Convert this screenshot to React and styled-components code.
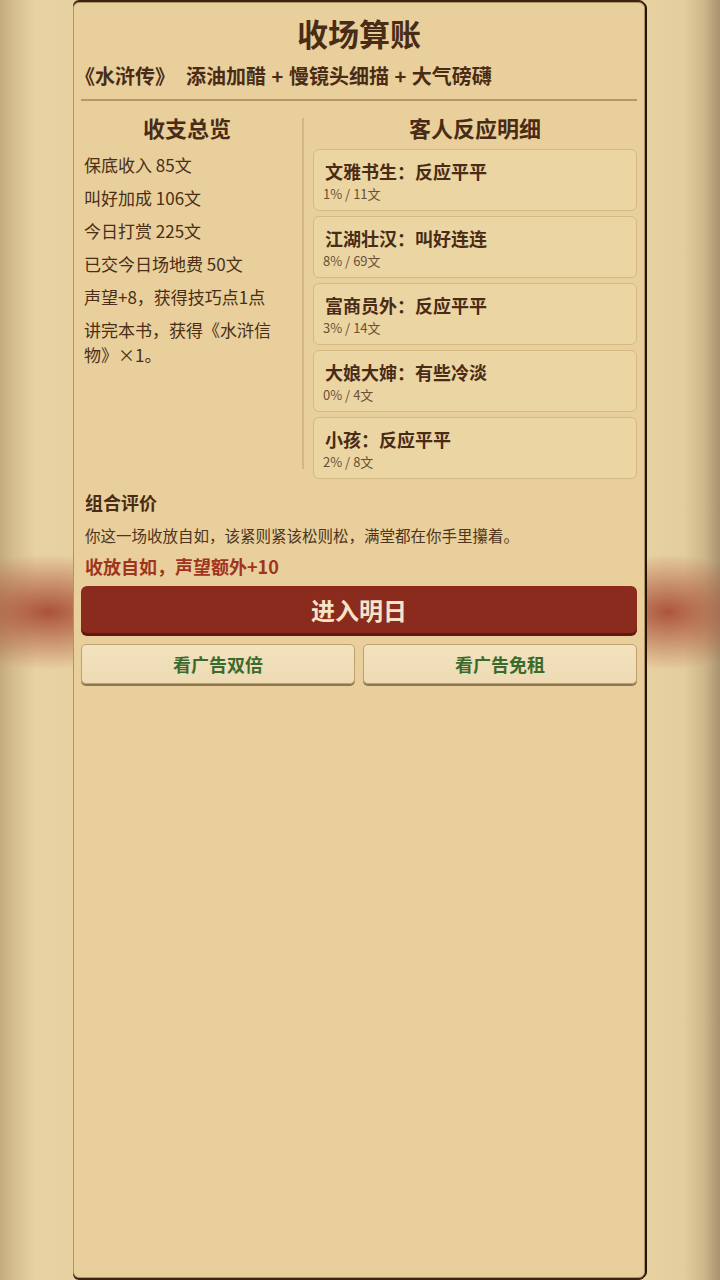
import styled, { createGlobalStyle } from 'styled-components';

const GlobalStyle = createGlobalStyle`
  html, body {
    margin: 0;
    padding: 0;
  }
  body {
    width: 720px;
    height: 1280px;
    overflow: hidden;
    font-family: 'Noto Sans CJK SC', 'Noto Sans', sans-serif;
  }
`;

const summary = [
  '保底收入 85文',
  '叫好加成 106文',
  '今日打赏 225文',
  '已交今日场地费 50文',
  '声望+8，获得技巧点1点',
  '讲完本书，获得《水浒信物》×1。',
];

const guests = [
  { name: '文雅书生', mood: '反应平平', rate: '1%', coins: '11文' },
  { name: '江湖壮汉', mood: '叫好连连', rate: '8%', coins: '69文' },
  { name: '富商员外', mood: '反应平平', rate: '3%', coins: '14文' },
  { name: '大娘大婶', mood: '有些冷淡', rate: '0%', coins: '4文' },
  { name: '小孩', mood: '反应平平', rate: '2%', coins: '8文' },
];

const App = () => {
  return (
    <StScreen>
      <GlobalStyle />
      <StPanel>
        <StTitle>收场算账</StTitle>
        <StSubtitle>{'《水浒传》  添油加醋 + 慢镜头细描 + 大气磅礴'}</StSubtitle>
        <StDivider />

        <StColumns>
          <StSummaryColumn>
            <StColumnHeading>收支总览</StColumnHeading>
            <StSummaryList>
              {summary.map((line) => (
                <StSummaryItem key={line}>{line}</StSummaryItem>
              ))}
            </StSummaryList>
          </StSummaryColumn>

          <StSeparator />

          <StGuestColumn>
            <StColumnHeading>客人反应明细</StColumnHeading>
            <StGuestList>
              {guests.map((g) => (
                <StGuestCard key={g.name}>
                  <StGuestTitle>
                    {g.name}：{g.mood}
                  </StGuestTitle>
                  <StGuestMeta>
                    {g.rate} / {g.coins}
                  </StGuestMeta>
                </StGuestCard>
              ))}
            </StGuestList>
          </StGuestColumn>
        </StColumns>

        <StComboSection>
          <StComboHeading>组合评价</StComboHeading>
          <StComboText>你这一场收放自如，该紧则紧该松则松，满堂都在你手里攥着。</StComboText>
          <StComboBonus>收放自如，声望额外+10</StComboBonus>
        </StComboSection>

        <StNextButton>进入明日</StNextButton>
        <StAdRow>
          <StAdButton>看广告双倍</StAdButton>
          <StAdButton>看广告免租</StAdButton>
        </StAdRow>
      </StPanel>
    </StScreen>
  );
};

export default App;

const StScreen = styled.div`
  width: 720px;
  height: 1280px;
  box-sizing: border-box;
  padding: 2px 0 0 73px;
  background:
    radial-gradient(ellipse 120px 58px at 48px 612px, rgba(162, 64, 44, 0.88), rgba(170, 80, 55, 0) 100%),
    radial-gradient(ellipse 100px 58px at 668px 612px, rgba(162, 64, 44, 0.85), rgba(170, 80, 55, 0) 100%),
    linear-gradient(
      to right,
      #c4aa7c 0px,
      #d6bd8e 14px,
      #e8d2a3 36px,
      #e8d1a1 72px,
      #e8d1a1 650px,
      #e4cd9d 684px,
      #cdb688 704px,
      #a89270 720px
    );
`;

const StPanel = styled.div`
  width: 572px;
  height: 1276px;
  box-sizing: border-box;
  padding: 9px 7px 0 7px;
  background: #e8cf9b;
  border: 1px solid #b2925f;
  border-radius: 6px;
  box-shadow:
    2px 0 0 #24150a,
    0 -2px 0 #3a2412,
    0 2px 0 #3a2412;
  color: #4a2e18;
`;

const StTitle = styled.h1`
  margin: 0;
  text-align: center;
  font-size: 31px;
  line-height: 42px;
  font-weight: 700;
  color: #4a2c16;
`;

const StSubtitle = styled.div`
  margin-top: 8px;
  margin-left: -6px;
  white-space: pre;
  word-spacing: 1px;
  font-size: 20px;
  line-height: 28px;
  font-weight: 700;
  color: #4a2c16;
`;

const StDivider = styled.div`
  height: 2px;
  margin-top: 9px;
  background: #b69866;
`;

const StColumns = styled.div`
  display: flex;
  align-items: stretch;
  margin-top: 11px;
`;

const StSummaryColumn = styled.div`
  width: 212px;
  flex-shrink: 0;
  display: flex;
  flex-direction: column;
`;

const StSeparator = styled.div`
  width: 2px;
  margin: 6px 9px 10px 9px;
  background: #d2b684;
`;

const StGuestColumn = styled.div`
  flex: 1;
  display: flex;
  flex-direction: column;
`;

const StColumnHeading = styled.h2`
  margin: 0;
  text-align: center;
  font-size: 22px;
  line-height: 30px;
  font-weight: 700;
  color: #4a2c16;
`;

const StSummaryList = styled.ul`
  list-style: none;
  margin: 10px 0 0;
  padding: 0 10px 0 3px;
  display: flex;
  flex-direction: column;
  gap: 8px;
`;

const StSummaryItem = styled.li`
  font-size: 17px;
  line-height: 25px;
  color: #4a2e18;
`;

const StGuestList = styled.div`
  margin-top: 7px;
  display: flex;
  flex-direction: column;
  gap: 5px;
`;

const StGuestCard = styled.div`
  padding: 9px 11px 7px 11px;
  background: #ebd5a3;
  border: 1px solid #d5b985;
  border-radius: 6px;
`;

const StGuestTitle = styled.div`
  font-size: 18px;
  line-height: 24px;
  font-weight: 700;
  color: #4a2c16;
`;

const StGuestMeta = styled.div`
  margin-top: 2px;
  margin-left: -2px;
  font-size: 13px;
  line-height: 18px;
  color: #6a5034;
`;

const StComboSection = styled.div`
  margin-top: 10px;
  padding-left: 4px;
`;

const StComboHeading = styled.h3`
  margin: 0;
  font-size: 18px;
  line-height: 26px;
  font-weight: 700;
  color: #4a2c16;
`;

const StComboText = styled.p`
  margin: 7px 0 0;
  font-size: 15.5px;
  line-height: 26px;
  color: #4e3520;
`;

const StComboBonus = styled.div`
  margin-top: 5px;
  font-size: 18px;
  line-height: 26px;
  font-weight: 700;
  color: #a0341f;
`;

const StNextButton = styled.button.attrs({
  type: 'button',
})`
  display: block;
  width: 100%;
  height: 47px;
  margin-top: 7px;
  border: none;
  border-radius: 6px;
  background: #8b2b1d;
  box-shadow: 0 3px 0 #62190f;
  font-family: inherit;
  font-size: 24px;
  font-weight: 700;
  color: #f7e4c6;
  cursor: pointer;
`;

const StAdRow = styled.div`
  display: grid;
  grid-template-columns: 1fr 1fr;
  gap: 8px;
  margin-top: 11px;
`;

const StAdButton = styled.button.attrs({
  type: 'button',
})`
  height: 40px;
  border: 1px solid #bda06e;
  border-radius: 5px;
  background: linear-gradient(to bottom, #f2e2be, #eedbb4);
  box-shadow: 0 2px 0 #8f7650;
  font-family: inherit;
  font-size: 18px;
  font-weight: 700;
  color: #3b6b2c;
  cursor: pointer;
`;
